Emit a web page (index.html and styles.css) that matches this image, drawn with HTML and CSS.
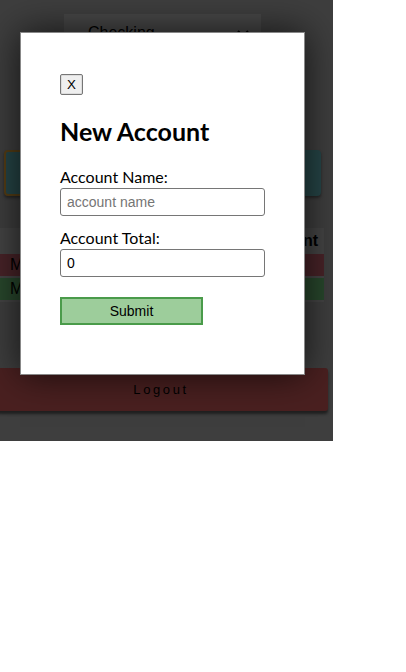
FILE: index.html
```html
<!DOCTYPE html>
<html>
<head>
<meta charset="utf-8">
<link rel="stylesheet" href="styles.css">
</head>
<body>
<div class="app">
  <div class="select-wrap">
    <div class="select">
      <span>Checking</span>
      <svg class="chev" width="12" height="8" viewBox="0 0 12 8"><path d="M1 1 L6 6 L11 1" fill="none" stroke="#000" stroke-width="2"/></svg>
    </div>
  </div>
  <div class="btn-row">
    <button class="teal focus">New Account</button>
    <button class="teal">New Transaction</button>
  </div>
  <table class="tbl">
    <thead><tr><th class="name">Name</th><th>Date</th><th class="amt">Amount</th></tr></thead>
    <tbody>
      <tr class="neg"><td>Mortgage</td><td></td><td></td></tr>
      <tr class="pos"><td>Money</td><td></td><td></td></tr>
    </tbody>
  </table>
  <button class="logout">Logout</button>

  <div class="overlay">
    <div class="modal">
      <button class="close">X</button>
      <h2 class="title">New Account</h2>
      <label class="lbl" for="n">Account Name:</label>
      <input class="field" id="n" type="text" placeholder="account name">
      <label class="lbl second" for="t">Account Total:</label>
      <input class="field" id="t" type="text" value="0">
      <button class="submit">Submit</button>
    </div>
  </div>
</div>
</body>
</html>
```
FILE: styles.css
```css
html, body {
  margin: 0;
  padding: 0;
  background: #fff;
}
.app {
  position: relative;
  width: 333px;
  height: 441px;
  background: #7c7c7c;
  font-family: "Liberation Sans", Arial, sans-serif;
  display: flex;
  flex-direction: column;
  overflow: hidden;
}
.select-wrap {
  padding: 14px 0 0 64px;
}
.select {
  width: 197px;
  height: 40px;
  background: #8e8e8e;
  box-sizing: border-box;
  padding: 10px 12px 0 24px;
  display: flex;
  justify-content: space-between;
  font-size: 16px;
  color: #000;
}
.chev { margin-top: 6px; }
.btn-row {
  margin-top: 96px;
  padding: 0 12px 0 4px;
  display: flex;
  gap: 10px;
}
.teal {
  flex: 1;
  height: 46px;
  background: #4c8a8e;
  border: 2px solid #4c8a8e;
  border-radius: 4px;
  box-shadow: 0 2px 3px rgba(0,0,0,0.4);
  font-size: 14px;
}
.teal.focus { border-color: #a87a2a; }
.tbl {
  margin-top: 32px;
  width: 324px;
  border-collapse: separate;
  border-spacing: 0 2px;
  background: #888;
  font-size: 16px;
}
.tbl th {
  height: 22px;
  text-align: center;
  padding: 0 6px;
}
.tbl th.name { padding-left: 40px; }
.tbl th.amt { text-align: right; }
.tbl td {
  height: 22px;
  padding: 0 10px;
}
.tbl tr.neg td { background: #904650; }
.tbl tr.pos td { background: #508e58; }
.logout {
  margin: 66px 5px 0 -6px;
  height: 43px;
  background: #944040;
  border: none;
  border-radius: 3px;
  box-shadow: 0 3px 3px rgba(0,0,0,0.5);
  font-family: "Liberation Sans", Arial, sans-serif;
  font-size: 13px;
  letter-spacing: 2.6px;
  color: #000;
}
.overlay {
  position: absolute;
  inset: 0;
  background: rgba(0,0,0,0.5);
  padding: 32px 0 0 20px;
  box-sizing: border-box;
}
.modal {
  width: 285px;
  height: 343px;
  box-sizing: border-box;
  background: #fff;
  border: 1px solid #888;
  padding: 41px 39px 0 39px;
  box-shadow: 0 0 35px rgba(0,0,0,0.7);
  font-family: Lato, "Segoe UI", sans-serif;
  display: flex;
  flex-direction: column;
  align-items: flex-start;
}
.close {
  font-family: "Liberation Sans", Arial, sans-serif;
  font-size: 13.33px;
  padding: 1px 6px;
  height: 21px;
  background: #efefef;
  border: 1px solid #767676;
  border-radius: 2px;
  box-shadow: inset 0 0 0 1px #ddd;
}
.title {
  margin: 20px 0 20px 0;
  font-size: 25px;
  font-weight: 700;
  line-height: 32px;
  color: #000;
}
.lbl {
  font-size: 16px;
  line-height: 20px;
  margin-bottom: 1px;
  color: #000;
}
.lbl.second { margin-top: 12px; }
.field {
  width: 205px;
  height: 28px;
  box-sizing: border-box;
  border: 1px solid #767676;
  border-radius: 3px;
  padding: 0 6px;
  font-family: "Liberation Sans", Arial, sans-serif;
  font-size: 14px;
  color: #000;
}
.field::placeholder { color: #757575; }
.submit {
  margin-top: 20px;
  width: 143px;
  height: 28px;
  background: #9dcd9b;
  border: 2px solid #4a9b4a;
  font-family: "Liberation Sans", Arial, sans-serif;
  font-size: 14px;
  color: #000;
}
```
